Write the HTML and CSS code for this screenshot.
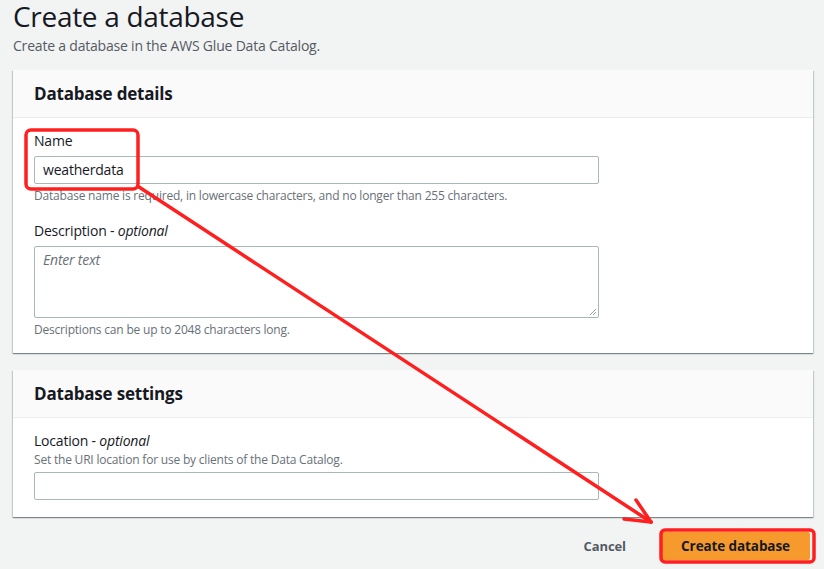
FILE: index.html
```html
<!DOCTYPE html>
<html lang="en">
<head>
<meta charset="utf-8">
<title>Create a database</title>
<link rel="stylesheet" href="styles.css">
</head>
<body>
<div class="page">
  <header class="page-head">
    <h1 class="page-title">Create a database</h1>
    <p class="page-desc">Create a database in the AWS Glue Data Catalog.</p>
  </header>

  <section class="card">
    <div class="card-head"><h2 class="card-title">Database details</h2></div>
    <div class="card-body">
      <div class="field">
        <label class="label">Name</label>
        <div class="input">weatherdata</div>
        <div class="hint">Database name is required, in lowercase characters, and no longer than 255 characters.</div>
      </div>
      <div class="field field-gap">
        <label class="label">Description - <i>optional</i></label>
        <div class="textarea"><span class="placeholder">Enter text</span>
          <svg class="grip" width="8" height="8" viewBox="0 0 8 8"><path d="M7 1 L1 7 M7 4 L4 7" stroke="#9aa0a6" stroke-width="1"/></svg>
        </div>
        <div class="hint">Descriptions can be up to 2048 characters long.</div>
      </div>
    </div>
  </section>

  <section class="card card-2">
    <div class="card-head"><h2 class="card-title">Database settings</h2></div>
    <div class="card-body body-2">
      <div class="field">
        <label class="label">Location - <i>optional</i></label>
        <div class="hint hint-top">Set the URI location for use by clients of the Data Catalog.</div>
        <div class="input input-loc"></div>
      </div>
    </div>
  </section>

  <div class="actions">
    <button class="btn-link">Cancel</button>
    <button class="btn-primary">Create database</button>
  </div>
</div>

<svg class="annot" width="824" height="569" viewBox="0 0 824 569">
  <rect x="26" y="130" width="112" height="59" rx="5" fill="none" stroke="#ff1f1f" stroke-width="3.5"/>
  <rect x="661" y="530" width="153" height="32" rx="4" fill="none" stroke="#ff1f1f" stroke-width="3.5"/>
  <g stroke="#ff1f1f" stroke-width="3.5" stroke-linecap="round" fill="none">
    <line x1="139" y1="187" x2="651" y2="522"/>
    <line x1="651" y1="522" x2="636" y2="500"/>
    <line x1="651" y1="522" x2="624" y2="519"/>
  </g>
</svg>
</body>
</html>
```

FILE: styles.css
```css
* { box-sizing: border-box; }
html, body { margin: 0; padding: 0; }
body {
  background: #f2f3f3;
  font-family: "Open Sans", "Noto Sans", Arial, sans-serif;
  color: #16191f;
  width: 824px;
  height: 569px;
  overflow: hidden;
  position: relative;
}
.page {
  padding: 0 11px 0 13px;
}
.page-title {
  margin: 0;
  font-size: 28px;
  font-weight: 400;
  line-height: 32px;
  color: #16191f;
  letter-spacing: -0.3px;
}
.page-desc {
  margin: 5px 0 0;
  font-size: 14px;
  line-height: 18px;
  color: #545b64;
  letter-spacing: -0.2px;
}
.card {
  margin-top: 15px;
  background: #fff;
  box-shadow: 0 1px 1px 0 rgba(0,28,36,0.3), 1px 1px 1px 0 rgba(0,28,36,0.15), -1px 1px 1px 0 rgba(0,28,36,0.15);
}
.card-2 { margin-top: 17px; }
.card-head {
  height: 48px;
  background: #fafafa;
  border-bottom: 1px solid #eaeded;
  padding: 0 21px;
  display: flex;
  align-items: center;
}
.card-title {
  margin: 0;
  font-size: 17px;
  font-weight: 700;
  letter-spacing: -0.2px;
}
.card-body {
  padding: 12px 20px 16px 21px;
}
.body-2 { padding-bottom: 17px; }
.field { display: flex; flex-direction: column; }
.field-gap { margin-top: 17px; }
.label {
  font-size: 14px;
  line-height: 22px;
  color: #16191f;
  letter-spacing: -0.2px;
}
.label i { font-style: italic; }
.input {
  margin-top: 4px;
  width: 565px;
  height: 28px;
  border: 1px solid #aab7b8;
  border-radius: 2px;
  padding: 0 8px;
  font-size: 14px;
  line-height: 26px;
  color: #16191f;
  letter-spacing: -0.2px;
}
.input-loc { margin-top: 4px; }
.textarea {
  position: relative;
  margin-top: 4px;
  width: 565px;
  height: 72px;
  border: 1px solid #aab7b8;
  border-radius: 2px;
  padding: 3px 8px;
  font-size: 14px;
  line-height: 20px;
  letter-spacing: -0.2px;
}
.placeholder { color: #687078; font-style: italic; }
.grip { position: absolute; right: 1px; bottom: 1px; }
.hint {
  margin-top: 5px;
  font-size: 12px;
  line-height: 14px;
  color: #687078;
  letter-spacing: -0.2px;
}
.hint-top { margin-top: 0; line-height: 16px; }
.actions {
  margin-top: 15px;
  display: flex;
  justify-content: flex-end;
  align-items: center;
  gap: 35px;
  padding-right: 1px;
}
.btn-link {
  background: none;
  border: none;
  font-family: inherit;
  font-size: 13px;
  font-weight: 700;
  color: #545b64;
  padding: 0;
  letter-spacing: -0.1px;
}
.btn-primary {
  width: 149px;
  height: 28px;
  background: #f79a2e;
  border: none;
  border-radius: 2px;
  font-family: inherit;
  font-size: 13.5px;
  font-weight: 700;
  color: #16191f;
  letter-spacing: -0.1px;
  margin-right: 2px;
}
.annot {
  position: absolute;
  left: 0;
  top: 0;
  pointer-events: none;
}
```
